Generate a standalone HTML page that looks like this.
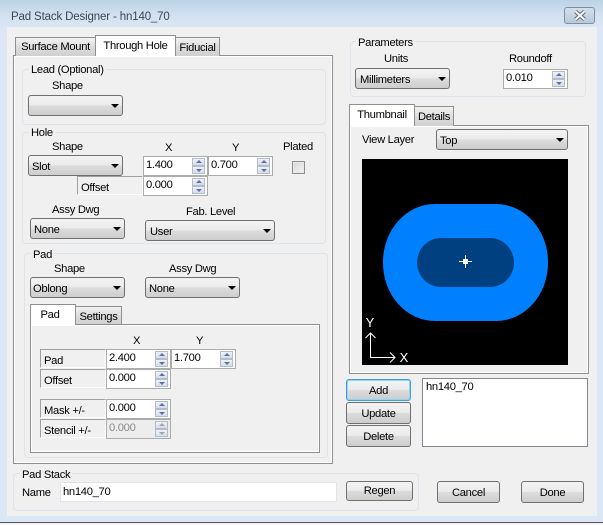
<!DOCTYPE html>
<html><head><meta charset="utf-8"><style>
html,body{margin:0;padding:0;}
body{width:603px;height:525px;position:relative;overflow:hidden;background:#dbe7f4;font:11.2px/14px "Liberation Sans",sans-serif;letter-spacing:-.3px;color:#000;}
div,span{position:absolute;box-sizing:border-box;}
.t{white-space:nowrap;height:14px;margin-top:1px;}
.g{border:1px solid #dce3ea;border-radius:4px;}
.l{background:#f0f0f0;padding:0 2px;white-space:nowrap;height:14px;margin-top:1px;}
.c{border:1px solid #707070;border-radius:3px;height:21px;background:linear-gradient(#f3f3f3,#ebebeb 48%,#ddd 50%,#cdcdcd);padding:4px 0 0 3px;line-height:14px;}
.c:after{content:"";position:absolute;right:3px;top:8px;border:4px solid transparent;border-top:4px solid #000;}
.s{border:1px solid #acacac;background:#fff;width:65px;height:20px;padding:1px 0 0 2px;line-height:14px;}
.s i{position:absolute;left:48px;width:13px;height:8px;background:linear-gradient(#eef2f8,#d5dde9);border:1px solid #b4bcc8;display:block;box-sizing:border-box;}
.s i.u{top:1px;}.s i.d{top:9px;}
.s i:after{content:"";position:absolute;left:3px;border:3px solid transparent;}
.s i.u:after{top:-2px;border-bottom:3px solid #5a6fae;}
.s i.d:after{top:2px;border-top:3px solid #5a6fae;}
.dis{background:#ededed;color:#8a8a8a;}
.dis i.u:after{border-bottom-color:#a5a5a5;}.dis i.d:after{border-top-color:#a5a5a5;}
.lb{border:1px solid #fff;border-top-color:#a0a0a0;border-left-color:#a0a0a0;background:#f0f0f0;height:19px;padding:4px 0 0 3px;line-height:14px;}
.b{border:1px solid #707070;border-radius:3px;background:linear-gradient(#f3f3f3,#ebebeb 48%,#ddd 50%,#cdcdcd);text-align:center;}
.tab{border:1px solid #8e8f8f;border-bottom:0;background:linear-gradient(#f2f2f2,#ddd 50%,#cfcfcf);text-align:center;}
.tab.on{background:#fff;z-index:3;}
.p{border:1px solid #8e8f8f;background:#f0f0f0;box-shadow:inset 0 0 0 1px #fff;}
</style></head><body>
<div style="left:0;top:0;width:603px;height:27px;background:linear-gradient(#bcd2e6,#d3e2f1 60%,#d9e6f3)"></div>
<div class="t" style="left:11px;top:9px;color:#3d4650;font-size:11.5px;letter-spacing:-.15px">Pad Stack Designer - hn140_70</div>
<div style="left:564px;top:7px;width:31px;height:17px;border:1px solid #7f8fa0;border-radius:3px;background:linear-gradient(#d3dfeb,#b9c9d9)">
<svg style="position:absolute;left:8px;top:2px" width="14" height="11"><path d="M2.500 1.500 L11.500 9.500 M11.500 1.500 L2.500 9.500" stroke="#5f6872" stroke-width="4"/><path d="M2.500 1.500 L11.500 9.500 M11.500 1.500 L2.500 9.500" stroke="#f4f6f8" stroke-width="2"/></svg></div>
<div style="left:7px;top:27px;width:590px;height:489px;background:#f0f0f0"></div>
<div style="left:0;top:522px;width:603px;height:1px;background:#555"></div>
<div style="left:0;top:523px;width:603px;height:2px;background:#f3f3f3"></div>

<!-- left tabs -->
<div class="p" style="left:13px;top:55px;width:320px;height:409px"></div>
<div class="tab" style="left:15px;top:37px;width:81px;height:19px;line-height:19px">Surface Mount</div>
<div class="tab on" style="left:95px;top:35px;width:81px;height:21px;line-height:20px">Through Hole</div>
<div class="tab" style="left:175px;top:37px;width:45px;height:19px;line-height:20px">Fiducial</div>

<!-- Lead -->
<div class="g" style="left:22px;top:69px;width:304px;height:56px"></div>
<div class="l" style="left:29px;top:62px">Lead (Optional)</div>
<div class="t" style="left:52px;top:78px">Shape</div>
<div class="c" style="left:28px;top:95px;width:95px"></div>

<!-- Hole -->
<div class="g" style="left:22px;top:132px;width:304px;height:112px"></div>
<div class="l" style="left:29px;top:125px">Hole</div>
<div class="t" style="left:52px;top:139px">Shape</div>
<div class="t" style="left:165px;top:140px">X</div>
<div class="t" style="left:232px;top:140px">Y</div>
<div class="t" style="left:283px;top:139px">Plated</div>
<div class="c" style="left:28px;top:155px;width:95px">Slot</div>
<div class="s" style="left:143px;top:156px">1.400<i class="u"></i><i class="d"></i></div>
<div class="s" style="left:208px;top:156px">0.700<i class="u"></i><i class="d"></i></div>
<div style="left:292px;top:161px;width:13px;height:13px;border:1px solid #8e8f8f;background:linear-gradient(135deg,#d8d8d8,#f4f4f4);box-shadow:inset 0 0 0 1px #e8e8e8"></div>
<div class="lb" style="left:77px;top:176px;width:66px;height:19px">Offset</div>
<div class="s" style="left:143px;top:176px">0.000<i class="u"></i><i class="d"></i></div>
<div class="t" style="left:52px;top:202px">Assy Dwg</div>
<div class="t" style="left:186px;top:204px">Fab. Level</div>
<div class="c" style="left:30px;top:218px;width:95px">None</div>
<div class="c" style="left:145px;top:220px;width:130px;padding-left:4px">User</div>

<!-- Pad -->
<div class="g" style="left:24px;top:253px;width:304px;height:205px"></div>
<div class="l" style="left:31px;top:247px">Pad</div>
<div class="t" style="left:54px;top:261px">Shape</div>
<div class="t" style="left:169px;top:261px">Assy Dwg</div>
<div class="c" style="left:30px;top:277px;width:95px;padding-left:2px">Oblong</div>
<div class="c" style="left:145px;top:277px;width:95px;padding-left:3px">None</div>
<div class="p" style="left:30px;top:324px;width:290px;height:129px"></div>
<div class="tab on" style="left:30px;top:304px;width:46px;height:21px;padding-right:6px;line-height:21px">Pad</div>
<div class="tab" style="left:75px;top:306px;width:47px;height:18px;line-height:20px">Settings</div>
<div class="t" style="left:133px;top:333px">X</div>
<div class="t" style="left:196px;top:333px">Y</div>
<div class="lb" style="left:40px;top:349px;width:66px">Pad</div>
<div class="s" style="left:106px;top:349px">2.400<i class="u"></i><i class="d"></i></div>
<div class="s" style="left:171px;top:349px">1.700<i class="u"></i><i class="d"></i></div>
<div class="lb" style="left:40px;top:369px;width:66px">Offset</div>
<div class="s" style="left:106px;top:369px">0.000<i class="u"></i><i class="d"></i></div>
<div class="lb" style="left:40px;top:399px;width:66px">Mask +/-</div>
<div class="s" style="left:106px;top:399px">0.000<i class="u"></i><i class="d"></i></div>
<div class="lb" style="left:40px;top:419px;width:66px">Stencil +/-</div>
<div class="s dis" style="left:106px;top:419px">0.000<i class="u"></i><i class="d"></i></div>

<!-- Pad Stack -->
<div class="g" style="left:13px;top:473px;width:406px;height:38px"></div>
<div class="l" style="left:20px;top:467px">Pad Stack</div>
<div class="t" style="left:22px;top:485px">Name</div>
<div style="left:60px;top:482px;width:277px;height:20px;background:#fff;border:1px solid #e2e3ea;padding:2px 0 0 2px;line-height:14px">hn140_70</div>
<div class="b" style="left:346px;top:481px;width:67px;height:20px;line-height:19px">Regen</div>
<div class="b" style="left:437px;top:481px;width:63px;height:22px;line-height:22px">Cancel</div>
<div class="b" style="left:521px;top:481px;width:63px;height:22px;line-height:22px">Done</div>

<!-- Parameters -->
<div class="g" style="left:350px;top:41px;width:236px;height:56px"></div>
<div class="l" style="left:356px;top:35px">Parameters</div>
<div class="t" style="left:384px;top:51px">Units</div>
<div class="t" style="left:509px;top:51px">Roundoff</div>
<div class="c" style="left:355px;top:68px;width:95px;padding-left:4px">Millimeters</div>
<div class="s" style="left:503px;top:69px">0.010<i class="u"></i><i class="d"></i></div>

<!-- Thumbnail -->
<div class="p" style="left:349px;top:125px;width:240px;height:249px"></div>
<div class="tab on" style="left:349px;top:104px;width:66px;height:22px;line-height:20px">Thumbnail</div>
<div class="tab" style="left:414px;top:106px;width:40px;height:20px;line-height:20px">Details</div>
<div class="t" style="left:362px;top:132px">View Layer</div>
<div class="c" style="left:436px;top:129px;width:132px">Top</div>
<svg style="position:absolute;left:362px;top:159px" width="206" height="206" viewBox="0 0 206 206">
<rect width="206" height="206" fill="#000"/>
<rect x="21" y="45" width="165" height="117" rx="52" ry="58" fill="#0080ff"/>
<rect x="55" y="79" width="97" height="49" rx="24" ry="24.500" fill="#004080"/>
<path d="M103.500 96V109M97 102.500H110" stroke="#fff" fill="none"/>
<rect x="101" y="100" width="5" height="5" fill="#fff"/>
<path d="M8.500 174V198.500H33M3.500 179L8.500 174L13.500 179M28 193.500L33 198.500L28 203.500" stroke="#fff" fill="none"/>
<text x="8" y="168" fill="#fff" font-family="Liberation Sans" font-size="13" letter-spacing="0" text-anchor="middle">Y</text>
<text x="42" y="203" fill="#fff" font-family="Liberation Sans" font-size="13" letter-spacing="0" text-anchor="middle">X</text>
</svg>

<!-- Buttons right -->
<div class="b" style="left:346px;top:379px;width:65px;height:22px;border-color:#3c9fd6;box-shadow:inset 0 0 0 1px #8ed6f5;line-height:22px">Add</div>
<div class="b" style="left:346px;top:402px;width:65px;height:22px;line-height:22px">Update</div>
<div class="b" style="left:346px;top:425px;width:65px;height:22px;line-height:22px">Delete</div>
<div style="left:422px;top:378px;width:166px;height:69px;background:#fff;border:1px solid #828790;padding:1px 0 0 3px;line-height:14px">hn140_70</div>
</body></html>
